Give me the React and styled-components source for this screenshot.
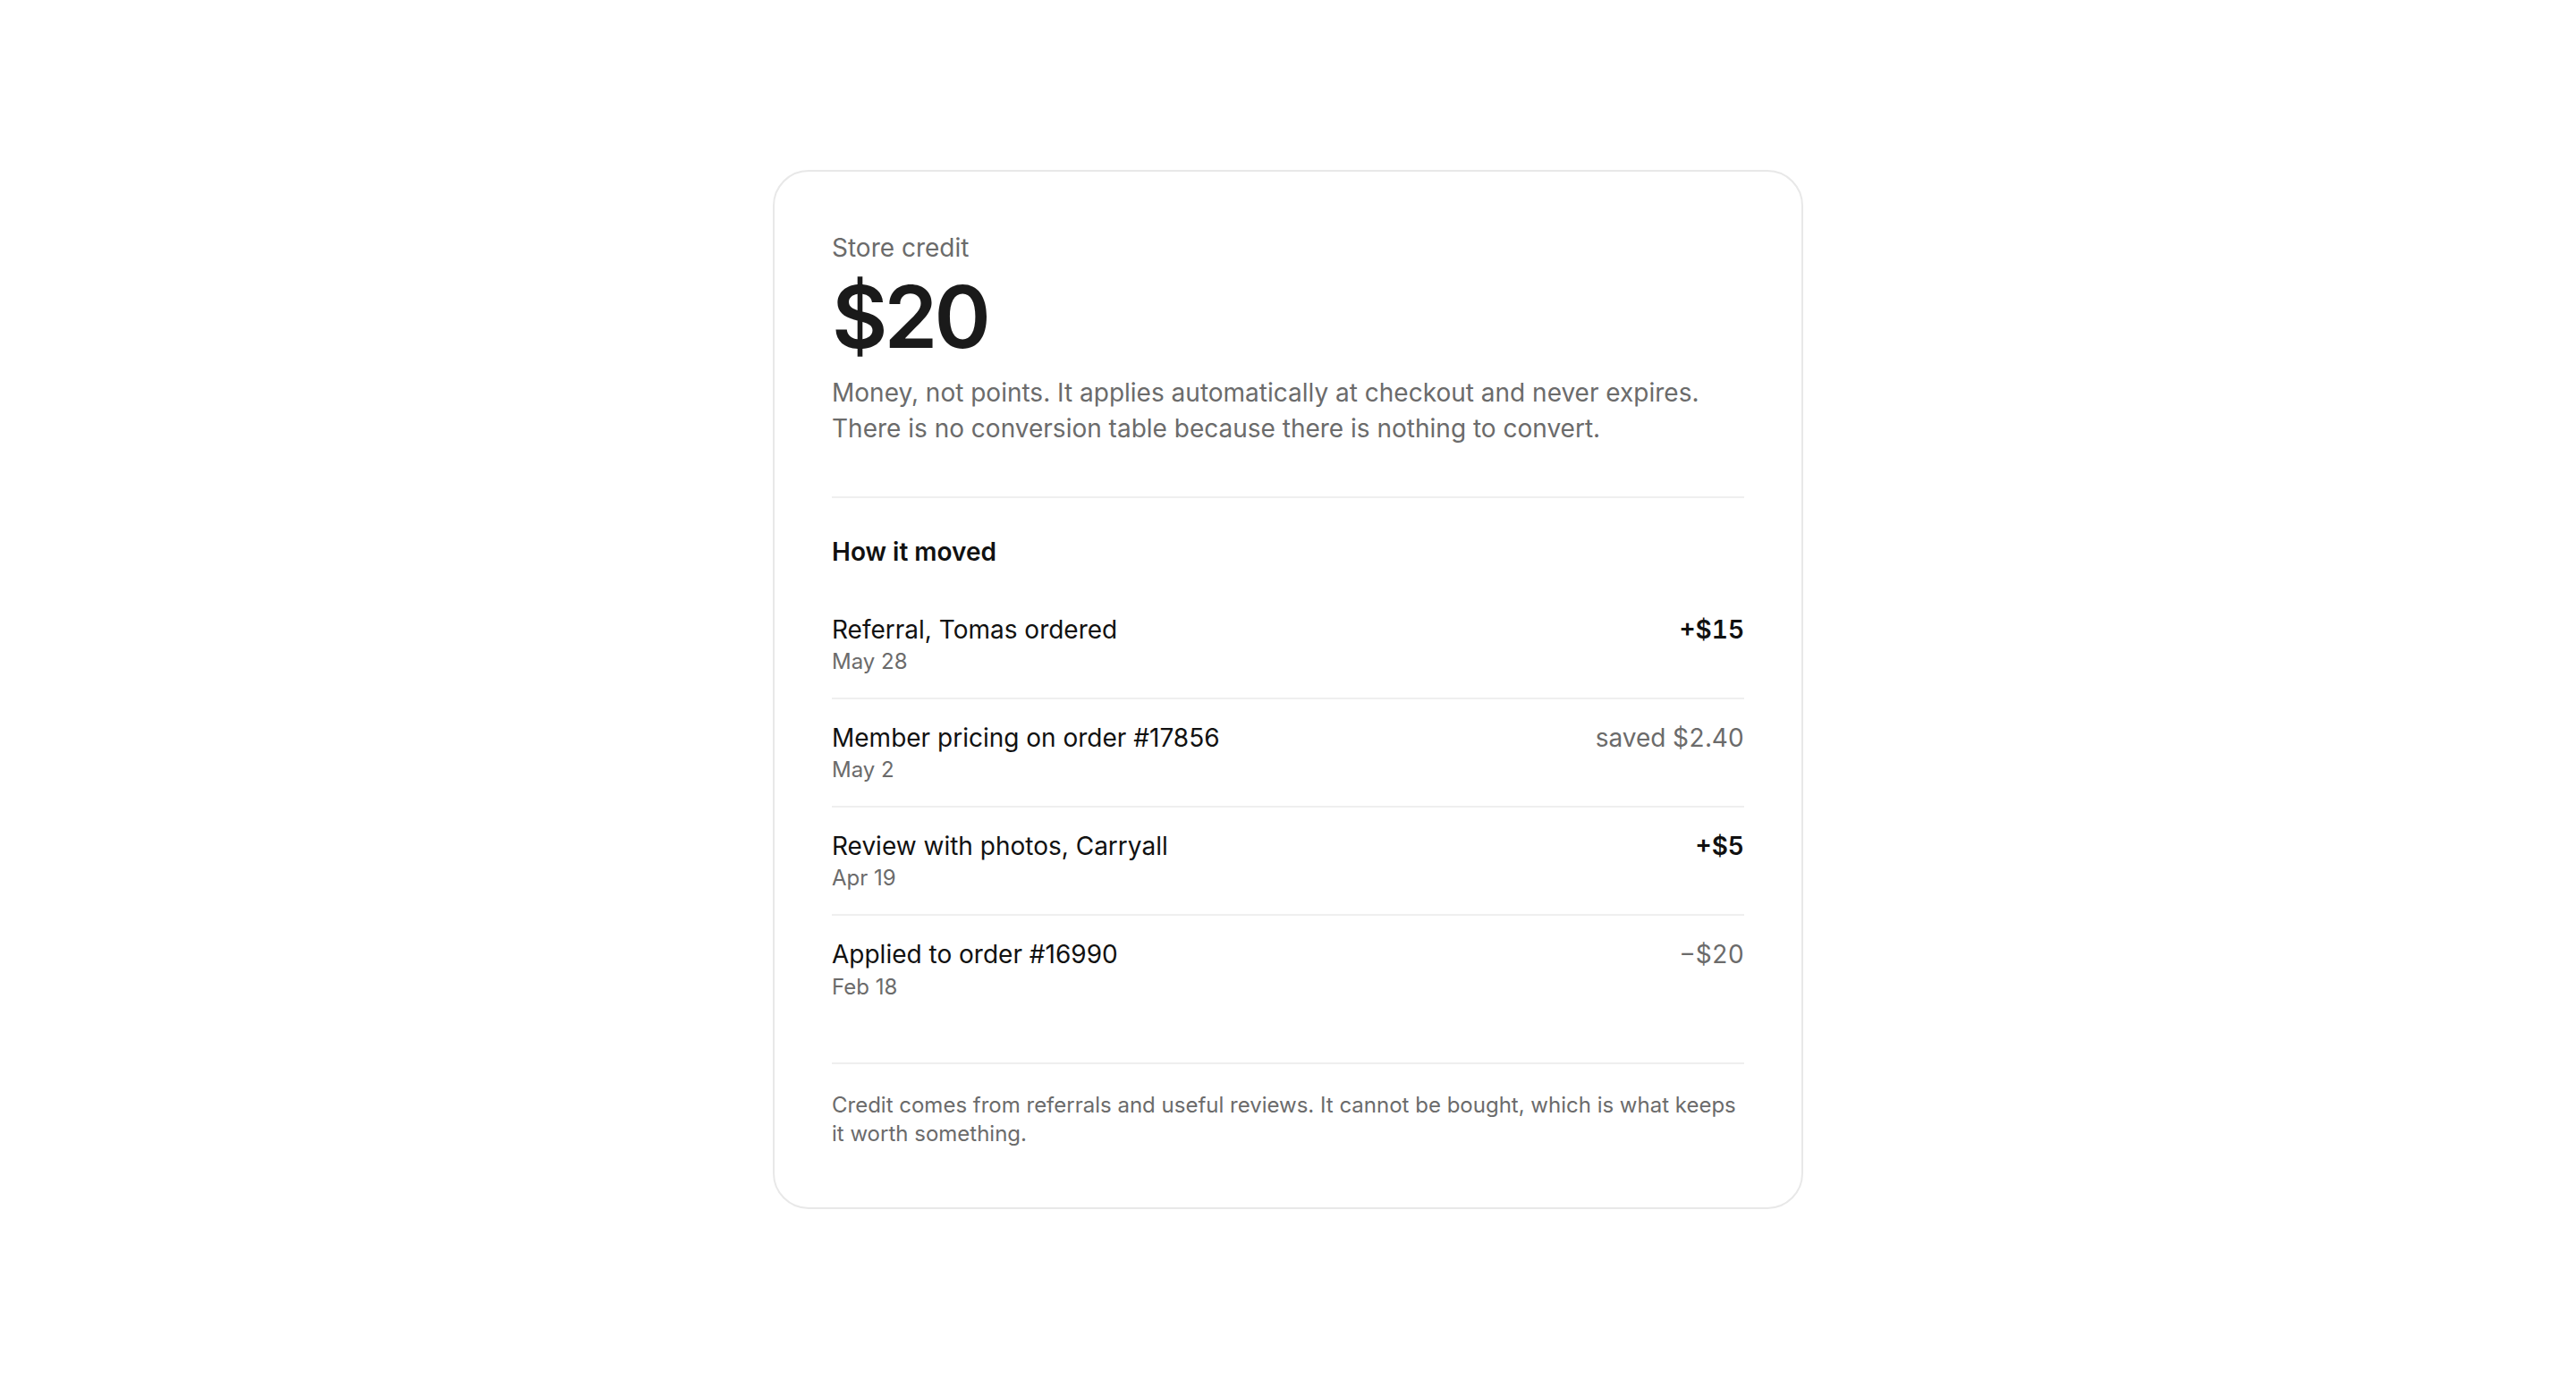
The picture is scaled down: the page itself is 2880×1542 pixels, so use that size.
// StoreCredit : store credit balance card with the list of how it moved

import React from "react";
import styled, { createGlobalStyle } from "styled-components";

const entries = [
  { title: "Referral, Tomas ordered", date: "May 28", amount: "+$15", credit: true },
  { title: "Member pricing on order #17856", date: "May 2", amount: "saved $2.40" },
  { title: "Review with photos, Carryall", date: "Apr 19", amount: "+$5", credit: true },
  { title: "Applied to order #16990", date: "Feb 18", amount: "\u2212$20" },
];

const GlobalStyle = createGlobalStyle`
  html, body {
    margin: 0;
    padding: 0;
    background: #ffffff;
  }
  body {
    font-family: Inter, "Noto Sans", "Liberation Sans", sans-serif;
    color: #111111;
    -webkit-font-smoothing: antialiased;
  }
  * {
    box-sizing: border-box;
  }
`;

const App = () => (
  <>
    <GlobalStyle />
    <Page>
      <Card>
        <Summary>
          <Label>Store credit</Label>
          <Balance>$20</Balance>
          <Description>
            Money, not points. It applies automatically at checkout and never expires.
            <br />
            There is no conversion table because there is nothing to convert.
          </Description>
        </Summary>

        <History>
          <Heading>How it moved</Heading>
          <List>
            {entries.map((e) => (
              <Row key={e.title}>
                <RowText>
                  <RowTitle>{e.title}</RowTitle>
                  <RowDate>{e.date}</RowDate>
                </RowText>
                <Amount $credit={e.credit}>{e.amount}</Amount>
              </Row>
            ))}
          </List>
        </History>

        <Footnote>
          Credit comes from referrals and useful reviews. It cannot be bought, which is what keeps
          it worth something.
        </Footnote>
      </Card>
    </Page>
  </>
);

const Page = styled.main`
  display: flex;
  align-items: center;
  justify-content: center;
  min-height: 100vh;
`;

const Card = styled.section`
  width: 1152px;
  padding: 66px 64px 66px;
  border: 2px solid #e8e8e8;
  border-radius: 40px;
  background: #ffffff;
`;

const Summary = styled.div`
  padding-bottom: 56px;
  border-bottom: 2px solid #efefef;
`;

const Label = styled.div`
  font-size: 28px;
  line-height: 1.4;
  color: #6b6b6b;
`;

const Balance = styled.div`
  margin-top: 8px;
  font-size: 96px;
  line-height: 1;
  font-weight: 600;
  letter-spacing: -0.04em;
  color: #1a1a1a;
`;

const Description = styled.p`
  margin: 17px 0 0;
  font-size: 28px;
  line-height: 40px;
  color: #6b6b6b;
`;

const History = styled.div`
  padding: 41px 0 44px;
  border-bottom: 2px solid #efefef;
`;

const Heading = styled.h3`
  margin: 0 0 24px;
  font-size: 28px;
  line-height: 1.4;
  font-weight: 600;
  color: #111111;
`;

const List = styled.ul`
  margin: 0;
  padding: 0;
  list-style: none;
`;

const Row = styled.li`
  display: flex;
  justify-content: space-between;
  align-items: flex-start;
  padding: 24px 0;
  border-bottom: 2px solid #efefef;

  &:last-child {
    border-bottom: none;
  }
`;

const RowText = styled.div`
  display: flex;
  flex-direction: column;
`;

const RowTitle = styled.span`
  font-size: 28px;
  line-height: 1.4;
  color: #111111;
`;

const RowDate = styled.span`
  font-size: 24px;
  line-height: 32px;
  color: #6b6b6b;
`;

const Amount = styled.span`
  font-size: 28px;
  line-height: 1.4;
  font-variant-numeric: tabular-nums;
  font-weight: ${({ $credit }) => ($credit ? 600 : 400)};
  color: ${({ $credit }) => ($credit ? "#111111" : "#6b6b6b")};
  white-space: nowrap;
`;

const Footnote = styled.p`
  margin: 0;
  padding-top: 30px;
  font-size: 24px;
  line-height: 32px;
  color: #6b6b6b;
`;

export default App;
